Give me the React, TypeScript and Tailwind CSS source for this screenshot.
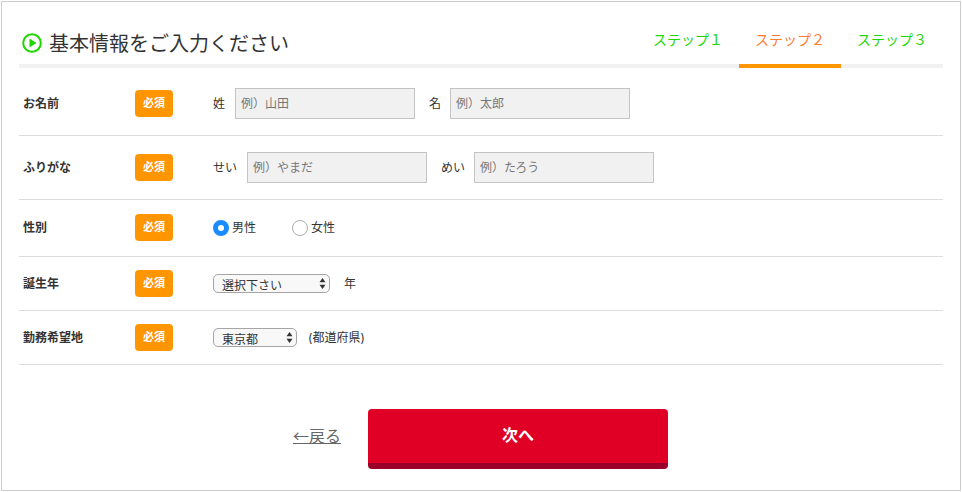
const font = "font-['Inter','Noto_Sans_CJK_JP',sans-serif]"

function Badge() {
  return (
    <span className="flex h-[27px] w-[38px] items-center justify-center rounded-[4px] bg-[#ff9500] text-[11px] font-bold text-white">
      必須
    </span>
  )
}

function Row({ label, height, children }: { label: string; height: string; children: React.ReactNode }) {
  return (
    <div className={`flex items-center border-b border-[#dddddd] ${height}`}>
      <div className="w-[116px] pl-1 text-[12px] font-bold text-[#333333]">{label}</div>
      <Badge />
      <div className="ml-10 flex items-center text-[12px] text-[#333333]">{children}</div>
    </div>
  )
}

function TextField({ placeholder }: { placeholder: string }) {
  return (
    <input
      placeholder={placeholder}
      className="h-[31px] w-[180px] border border-[#c4c4c4] bg-[#f1f1f1] px-[5px] text-[12px] placeholder:text-[#777777]"
    />
  )
}

function Select({ value, width }: { value: string; width: string }) {
  return (
    <div className={`relative h-[19px] ${width}`}>
      <select className="h-full w-full appearance-none rounded-[5px] border border-[#a5a5a5] bg-[#f8f8f8] pt-[2px] pl-2 text-[12px] text-[#333333]">
        <option>{value}</option>
      </select>
      <svg className="pointer-events-none absolute top-1 right-[4px]" width="7" height="11" viewBox="0 0 7 11">
        <path d="M3.5 0 L6.5 4.2 H0.5 Z M3.5 11 L0.5 6.8 H6.5 Z" fill="#333333" />
      </svg>
    </div>
  )
}

function Step({ label, active }: { label: string; active?: boolean }) {
  return (
    <div
      className={`flex h-[68px] w-[102px] items-center justify-center border-b-4 pt-[14px] text-[14px] ${
        active ? "border-[#ff9500] text-[#ff7b2e]" : "border-transparent text-[#1ed600]"
      }`}
    >
      {label}
    </div>
  )
}

export default function App() {
  return (
    <div className={`${font} m-px flex h-[490px] w-[960px] flex-col border border-[#cccccc] bg-white px-[17px]`}>
      {/* Header */}
      <div className="flex h-[66px] items-end justify-between border-b-4 border-[#f1f1f1]">
        <div className="flex h-[62px] items-center pt-[20px]">
          <svg width="20" height="20" viewBox="0 0 20 20" className="ml-[3px]">
            <circle cx="10" cy="10" r="8.8" fill="none" stroke="#1ed600" strokeWidth="2" />
            <path d="M7.5 5.5 L14.5 10 L7.5 14.5 Z" fill="#1ed600" />
          </svg>
          <h1 className="ml-[7px] pt-px text-[20px] font-normal text-[#333333]">基本情報をご入力ください</h1>
        </div>
        <div className="-mb-1 flex">
          <Step label="ステップ１" />
          <Step label="ステップ２" active />
          <Step label="ステップ３" />
        </div>
      </div>

      {/* Form rows */}
      <Row label="お名前" height="h-[68px] pt-1">
        <span className="w-[22px]">姓</span>
        <TextField placeholder="例）山田" />
        <span className="ml-[14px] w-[21px]">名</span>
        <TextField placeholder="例）太郎" />
      </Row>
      <Row label="ふりがな" height="h-[64px]">
        <span className="w-[34px]">せい</span>
        <TextField placeholder="例）やまだ" />
        <span className="ml-[14px] w-[33px]">めい</span>
        <TextField placeholder="例）たろう" />
      </Row>
      <Row label="性別" height="h-[57px] pb-px">
        <span className="h-[16px] w-[16px] rounded-full border-[5px] border-[#1a8cff] bg-white" />
        <span className="ml-[3px] pt-px">男性</span>
        <span className="ml-[36px] h-[16px] w-[16px] rounded-full border border-[#aaaaaa] bg-white" />
        <span className="ml-[3px] pt-px">女性</span>
      </Row>
      <Row label="誕生年" height="h-[54px]">
        <Select value="選択下さい" width="w-[117px]" />
        <span className="ml-[14px] pt-px">年</span>
      </Row>
      <Row label="勤務希望地" height="h-[54px]">
        <Select value="東京都" width="w-[84px]" />
        <span className="ml-[11px] pt-px">(都道府県)</span>
      </Row>

      {/* Footer */}
      <div className="mt-[44px] flex items-start">
        <a className="ml-[274px] mt-[14px] font-['Noto_Sans_CJK_JP',sans-serif] text-[16px] text-[#666666] underline">←戻る</a>
        <button className="ml-[27px] h-[60px] w-[300px] rounded-[4px] border-b-[6px] border-[#99002a] bg-[#e10025] pb-[2px] text-[16px] font-bold text-white">
          次へ
        </button>
      </div>
    </div>
  )
}
